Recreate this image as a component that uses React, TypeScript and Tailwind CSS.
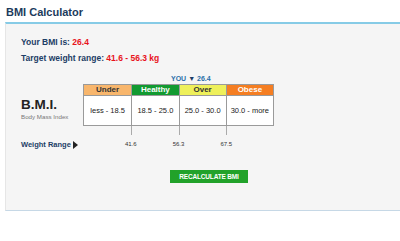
const ranges = [
  { label: "Under", bg: "bg-[#f8b66c]", fg: "text-[#333]", text: "less - 18.5" },
  { label: "Healthy", bg: "bg-[#129a31]", fg: "text-white", text: "18.5 - 25.0" },
  { label: "Over", bg: "bg-[#eef05a]", fg: "text-[#333]", text: "25.0 - 30.0" },
  { label: "Obese", bg: "bg-[#f57e22]", fg: "text-white", text: "30.0 - more" },
];

const weights = ["41.6", "56.3", "67.5"];

export default function App() {
  return (
    <div className="w-[400px] h-[241px] bg-white font-['Liberation_Sans',Arial,sans-serif] overflow-hidden">
      <div className="h-[22px] pl-[6px] pt-[6px] text-[11px] font-bold leading-[13px] text-[#1c3b5c]">
        BMI Calculator
      </div>
      <div className="ml-[5px] h-[189px] border-t-2 border-[#86cbe6] border-b border-b-[#c6d8e6] border-l border-l-[#e6e6e6] bg-[#f5f5f5]">
        <div className="pl-[15px] pt-[13px] text-[8.5px] font-bold leading-[10px] text-[#1c3d66]">
          Your BMI is: <span className="text-[#e8131b]">26.4</span>
        </div>
        <div className="pl-[15px] pt-[6px] text-[8.5px] font-bold leading-[10px] text-[#1c3d66]">
          Target weight range: <span className="text-[#e8131b]">41.6 - 56.3 kg</span>
        </div>

        <div className="flex pl-[15px] pt-[11px]">
          <div className="w-[62px] flex flex-col justify-end pb-[5px]">
            <div className="text-[13.5px] font-bold leading-[16px] text-[#222]">B.M.I.</div>
            <div className="text-[6.2px] leading-[8px] text-[#777]">Body Mass Index</div>
          </div>
          <div className="w-[191px]">
            <div className="h-[10px] pl-[88px] text-[7px] font-bold leading-[10px] text-[#2a6fa8]">
              YOU <span className="text-[#1c3d66]">▼</span> 26.4
            </div>
            <div className="grid grid-cols-4 border border-[#9a9a9a]">
              {ranges.map((r, i) => (
                <div key={r.label} className={i > 0 ? "border-l border-[#9a9a9a]" : ""}>
                  <div className={`h-[10px] ${r.bg} ${r.fg} text-[8px] font-bold leading-[10px] text-center border-b border-[#9a9a9a] box-content`}>
                    {r.label}
                  </div>
                  <div className="h-[29px] bg-white flex items-center justify-center text-[7.5px] text-[#222]">
                    {r.text}
                  </div>
                </div>
              ))}
            </div>
          </div>
        </div>

        <div className="flex pl-[15px]">
          <div className="w-[62px] pt-[14px] flex items-center gap-[2px] text-[7.5px] font-bold leading-[10px] text-[#1c3d66]">
            Weight Range
            <svg width="5" height="8" viewBox="0 0 5 8">
              <path d="M0 0 L5 4 L0 8 Z" fill="#222" />
            </svg>
          </div>
          <div className="w-[191px] grid grid-cols-4">
            <div />
            {weights.map((w) => (
              <div key={w} className="relative">
                <div className="w-px h-[9px] bg-[#aaa]" />
                <div className="absolute left-[-15px] w-[30px] top-[14px] text-center text-[6px] leading-[8px] text-[#333]">
                  {w}
                </div>
              </div>
            ))}
          </div>
        </div>

        <div className="flex justify-center pl-[12px] pt-[20px]">
          <div className="w-[78px] h-[13px] bg-[#22a22a] text-white text-[6.5px] font-bold leading-[13px] text-center tracking-tight">
            RECALCULATE BMI
          </div>
        </div>
      </div>
    </div>
  );
}
